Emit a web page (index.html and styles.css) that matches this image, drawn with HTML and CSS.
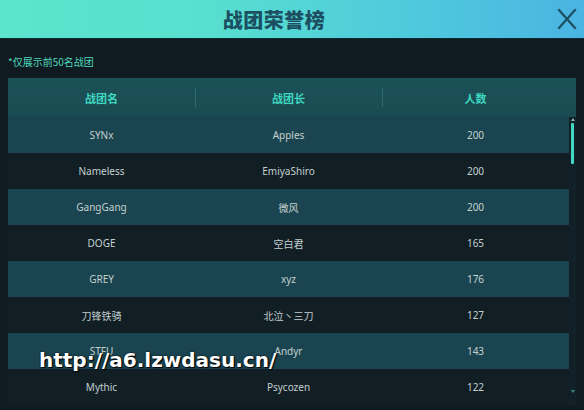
FILE: index.html
```html
<!DOCTYPE html>
<html lang="zh">
<head>
<meta charset="utf-8">
<title>战团荣誉榜</title>
<link rel="stylesheet" href="styles.css">
</head>
<body>
<div class="page">
  <header class="header">
    <h1 class="title">战团荣誉榜</h1>
    <button class="close" aria-label="关闭">
      <svg viewBox="0 0 20 22" width="20" height="22"><path d="M2 2 L18 20 M18 2 L2 20" stroke="#1d4f62" stroke-width="2.2" fill="none" stroke-linecap="square"/></svg>
    </button>
  </header>
  <p class="note">*仅展示前50名战团</p>
  <div class="table">
    <div class="thead">
      <div class="th">战团名</div>
      <div class="th sep">战团长</div>
      <div class="th sep">人数</div>
    </div>
    <div class="tbody">
      <div class="rows">
        <div class="row odd"><span>SYNx</span><span>Apples</span><span>200</span></div>
        <div class="row"><span>Nameless</span><span>EmiyaShiro</span><span>200</span></div>
        <div class="row odd"><span>GangGang</span><span>微风</span><span>200</span></div>
        <div class="row"><span>DOGE</span><span>空白君</span><span>165</span></div>
        <div class="row odd"><span>GREY</span><span>xyz</span><span>176</span></div>
        <div class="row"><span>刀锋铁骑</span><span>北泣丶三刀</span><span>127</span></div>
        <div class="row odd"><span>STFU</span><span>Andyr</span><span>143</span></div>
        <div class="row"><span>Mythic</span><span>Psycozen</span><span>122</span></div>
      </div>
      <div class="scroll">
        <div class="arrow up"></div>
        <div class="thumb"></div>
        <div class="track"></div>
        <div class="arrow down"></div>
      </div>
    </div>
  </div>
  <div class="watermark">http://a6.lzwdasu.cn/</div>
</div>
</body>
</html>
```
FILE: styles.css
```css
html, body {
  margin: 0;
  padding: 0;
}
body {
  background: #0f1b20;
  font-family: "Noto Sans", "Noto Sans CJK SC", sans-serif;
}
.page {
  position: relative;
  width: 584px;
  height: 410px;
  overflow: hidden;
  background: #0f1b20;
}
.header {
  height: 38px;
  display: flex;
  align-items: center;
  justify-content: center;
  padding-right: 36px;
  background: linear-gradient(90deg, #5de4cd 0%, #58dfcf 35%, #50cddb 65%, #4ab4e2 100%);
  border-bottom: 1px solid #0c2a30;
  position: relative;
}
.title {
  margin: 0;
  font-family: "Noto Sans CJK SC", sans-serif;
  font-size: 20px;
  font-weight: 900;
  color: #1b4f61;
  letter-spacing: 0.5px;
}
.close {
  position: absolute;
  right: 7px;
  top: 8px;
  width: 20px;
  height: 22px;
  padding: 0;
  border: 0;
  background: none;
}
.close svg {
  display: block;
}
.note {
  margin: 0;
  padding: 16px 8px 0;
  height: 23px;
  font-family: "Noto Sans CJK SC", sans-serif;
  font-size: 10px;
  line-height: 14px;
  color: #4fd9bf;
}
.table {
  margin: 0 8px;
  width: 568px;
  background: #112127;
}
.thead {
  display: grid;
  grid-template-columns: 187px 187px 194px;
  height: 39px;
  background: linear-gradient(180deg, #1c5158 0%, #1a4a52 100%);
}
.th {
  display: flex;
  align-items: center;
  justify-content: center;
  font-family: "Noto Sans CJK SC", sans-serif;
  font-size: 11px;
  font-weight: 700;
  color: #3ed8c0;
  position: relative;
}
.th:last-child {
  padding-right: 7px;
}
.th.sep::before {
  content: "";
  position: absolute;
  left: 0;
  top: 10px;
  bottom: 10px;
  width: 1px;
  background: #2b6a6e;
}
.tbody {
  display: flex;
}
.rows {
  width: 561px;
}
.row {
  display: grid;
  grid-template-columns: 187px 187px 187px;
  height: 36px;
  align-items: center;
  background: #111f25;
}
.row.odd {
  background: #1a4550;
}
.row span {
  text-align: center;
  font-family: "Noto Sans", "Noto Sans CJK SC", sans-serif;
  font-size: 10px;
  color: #c4cfcf;
}
.scroll {
  width: 7px;
  display: flex;
  flex-direction: column;
  align-items: center;
  padding-top: 1px;
}
.arrow {
  width: 0;
  height: 0;
  border-left: 2px solid transparent;
  border-right: 2px solid transparent;
}
.arrow.up {
  border-bottom: 3px solid #7fb8b4;
  margin-bottom: 2px;
}
.arrow.down {
  border-top: 3px solid #3a8a88;
  margin-bottom: 12px;
}
.thumb {
  width: 3px;
  height: 41px;
  border-radius: 1px;
  background: #3fd8c0;
}
.track {
  flex: 1;
}
.watermark {
  position: absolute;
  left: 39px;
  top: 348px;
  font-family: "DejaVu Sans", sans-serif;
  font-weight: 700;
  font-size: 20px;
  color: #ffffff;
  text-shadow: 0 0 2px #000, 1px 1px 1px #000;
  white-space: nowrap;
}
```
